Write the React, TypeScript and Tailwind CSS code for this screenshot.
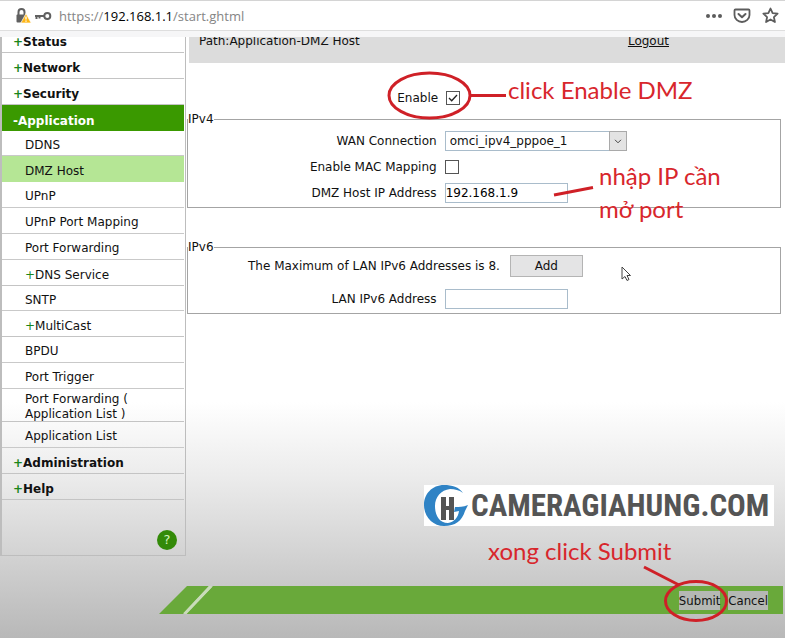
import React from "react";

type Item = { label: string; kind: "top" | "open" | "sub" | "short" | "active" | "parent" | "double" };

const items: Item[] = [
  { label: "Status", kind: "top" },
  { label: "Network", kind: "top" },
  { label: "Security", kind: "top" },
  { label: "Application", kind: "open" },
  { label: "DDNS", kind: "short" },
  { label: "DMZ Host", kind: "active" },
  { label: "UPnP", kind: "sub" },
  { label: "UPnP Port Mapping", kind: "sub" },
  { label: "Port Forwarding", kind: "sub" },
  { label: "DNS Service", kind: "parent" },
  { label: "SNTP", kind: "short" },
  { label: "MultiCast", kind: "parent" },
  { label: "BPDU", kind: "sub" },
  { label: "Port Trigger", kind: "sub" },
  { label: "Port Forwarding ( Application List )", kind: "double" },
  { label: "Application List", kind: "sub" },
  { label: "Administration", kind: "top" },
  { label: "Help", kind: "top" },
];

const rowStyle: Record<Item["kind"], string> = {
  top: "h-[26px] pt-[6px] pl-[11px] font-bold border-b border-[#c4c4c4]",
  open: "h-[26px] pt-[6px] pl-[11px] font-bold text-white bg-[#3a9900]",
  sub: "h-[26px] pt-1 pl-[23px] border-b border-[#c9c9c9]",
  short: "h-[25px] pt-1 pl-[23px] border-b border-[#c9c9c9]",
  active: "h-[26px] pt-1 pl-[23px] bg-[#b5e695]",
  parent: "h-[26px] pt-[6px] pl-[23px] border-b border-[#c4c4c4]",
  double: "h-[33px] pt-1 pl-[23px] pr-10 border-b border-[#c4c4c4]",
};

function AddressBar() {
  return (
    <header className="border-t border-[#d4d4d4] bg-[#f6f6f7]">
      <div className="flex h-[30px] items-center border-b border-[#dedede] bg-white pl-4 pr-[6px]">
        <svg width="16" height="18" viewBox="0 0 16 18" aria-hidden="true">
          <path d="M2.500 8V5a3 3 0 0 1 6 0V8" fill="none" stroke="#606060" strokeWidth="2" />
          <rect x="0.500" y="7.500" width="9" height="8" rx="1" fill="#606060" />
          <path d="M10 6.500 15.200 16H4.800Z" fill="#fdb515" stroke="#fff" strokeWidth="0.700" strokeLinejoin="round" />
          <path d="M10 9.500v3M10 13.600v1.200" stroke="#fff" strokeWidth="1.300" />
        </svg>
        <svg className="ml-[3px]" width="17" height="10" viewBox="0 0 17 10" aria-hidden="true">
          <circle cx="12.300" cy="5" r="3" fill="none" stroke="#606060" strokeWidth="2" />
          <path d="M9.500 5H0M1.500 5v3M4.500 5v2.600" fill="none" stroke="#606060" strokeWidth="2" />
        </svg>
        <span className="ml-[7px] flex-1 pt-px font-['Open_Sans',sans-serif] text-[13px] leading-5 text-[#858585]">
          https://<span className="text-black">192.168.1.1</span>/start.ghtml
        </span>
        <button type="button" aria-label="More">
          <svg width="18" height="6" viewBox="0 0 18 6" fill="#5c5c5c">
            <circle cx="3" cy="3" r="2" />
            <circle cx="9" cy="3" r="2" />
            <circle cx="15" cy="3" r="2" />
          </svg>
        </button>
        <button type="button" aria-label="Save to Pocket" className="ml-[10px]">
          <svg width="18" height="16" viewBox="0 0 18 16" fill="none" stroke="#5c5c5c" strokeWidth="1.800" strokeLinecap="round" strokeLinejoin="round">
            <path d="M2.500 1.500h13q1 0 1 1V7a7.500 7 0 0 1-15 0V2.500q0-1 1-1Z" />
            <path d="m5.500 6 3.500 3.300L12.500 6" strokeWidth="2" />
          </svg>
        </button>
        <button type="button" aria-label="Bookmark" className="ml-[11px]">
          <svg width="17" height="17" viewBox="0 0 17 17" fill="none" stroke="#5c5c5c" strokeWidth="1.800" strokeLinejoin="round">
            <path d="m8.500 1.500 2.100 4.600 5 .6-3.700 3.400 1 4.900-4.400-2.500L4.100 15l1-4.900L1.400 6.700l5-.6Z" />
          </svg>
        </button>
      </div>
      <div className="h-[6px]" />
    </header>
  );
}

function Sidebar() {
  return (
    <aside className="flex w-[186px] shrink-0 flex-col border-b border-l-2 border-r border-[#bdbdbd] pr-px">
      <nav>
        {items.map((item) => (
          <a key={item.label} href="#" className={`flex items-center leading-[15px] ${rowStyle[item.kind]}`}>
            <span>
              {(item.kind === "top" || item.kind === "parent") && <span className="text-[#1a861a]">+</span>}
              {item.kind === "open" && "-"}
              {item.label}
            </span>
          </a>
        ))}
      </nav>
      <div className="mt-[30px] mb-[5px] flex justify-end pr-[7px]">
        <button type="button" aria-label="Help topics" className="size-5 rounded-full bg-[#338a08] text-[13px] leading-5 text-[#d3f5bd]">
          ?
        </button>
      </div>
    </aside>
  );
}

function Row({ label, id, children }: { label: string; id: string; children: React.ReactNode }) {
  return (
    <div className="flex h-[26px] items-center gap-2">
      <label htmlFor={id} className="w-[42%] shrink-0 whitespace-nowrap text-right">
        {label}
      </label>
      {children}
    </div>
  );
}

const tick = "size-[14px] appearance-none border border-[#555] bg-white";
const box = "h-5 w-[123px] border border-[#a9bccb] bg-white text-black";
const group = "mr-1 border border-[#a4a4a4] pb-px";

function Content() {
  return (
    <main className="min-w-0 flex-1 pl-px">
      <div className="ml-[2px] flex h-9 items-start justify-between bg-[#dcdcdc] pt-[2px] pl-[10px] pr-[116px] leading-6">
        <span>Path:Application-DMZ Host</span>
        <a href="#" className="underline">Logout</a>
      </div>
      <form id="dmz" className="pt-[22px]">
        <Row label="Enable" id="enable">
          <span className="grid">
            <input id="enable" type="checkbox" defaultChecked className={`${tick} col-start-1 row-start-1`} />
            <svg className="pointer-events-none col-start-1 row-start-1" width="14" height="14" viewBox="0 0 14 14" fill="none" stroke="#222" strokeWidth="1.300">
              <path d="m3 7 2.700 2.800L11 4" />
            </svg>
          </span>
        </Row>
        <fieldset className={group}>
          <legend className="leading-4">IPv4</legend>
          <div className="pt-px">
            <Row label="WAN Connection" id="wan">
              <span className="grid w-[182px]">
                <select id="wan" className="col-start-1 row-start-1 h-5 appearance-none border border-[#a9bccb] bg-white pl-1">
                  <option>omci_ipv4_pppoe_1</option>
                </select>
                <span className="pointer-events-none col-start-1 row-start-1 flex h-5 w-[18px] items-center justify-center justify-self-end border border-[#a9a9a9] bg-[#e3e3e3]">
                  <svg width="8" height="5" viewBox="0 0 8 5" fill="none" stroke="#444">
                    <path d="m1 .8 3 3 3-3" />
                  </svg>
                </span>
              </span>
            </Row>
            <Row label="Enable MAC Mapping" id="mac">
              <input id="mac" type="checkbox" className={tick} />
            </Row>
            <Row label="DMZ Host IP Address" id="ip">
              <input id="ip" type="text" defaultValue="192.168.1.9" className={box} />
            </Row>
          </div>
        </fieldset>
        <fieldset className={`${group} mt-[31px]`}>
          <legend className="leading-4">IPv6</legend>
          <div className="flex h-[22px] items-center gap-[10px] pl-[60px]">
            <span className="whitespace-nowrap">The Maximum of LAN IPv6 Addresses is 8.</span>
            <button type="button" className="h-[22px] w-[73px] border border-[#b4b4b4] bg-[#e4e4e5]">Add</button>
          </div>
          <div className="pt-[9px]">
            <Row label="LAN IPv6 Address" id="lan">
              <input id="lan" type="text" className={box} />
            </Row>
          </div>
        </fieldset>
      </form>
    </main>
  );
}

function Footer() {
  const button = "h-[19px] bg-[#b5b8b4] font-['DejaVu_Sans_Condensed','DejaVu_Sans',sans-serif] text-[13px] leading-[19px]";
  return (
    <footer className="mt-[30px] ml-[159px] mr-[2px] flex h-7">
      <svg className="shrink-0" width="56" height="28" viewBox="0 0 56 28" aria-hidden="true">
        <path d="M28 0H50L24 28H0Z" fill="#69a93a" />
        <path d="M56 0V28H27L54 0Z" fill="#69a93a" />
        <path d="M52 0 25.500 28" stroke="#c9dcb9" strokeWidth="3" />
      </svg>
      <div className="flex flex-1 items-center justify-end gap-2 bg-[#69a93a] pr-[15px]">
        <button type="submit" form="dmz" className={button}>Submit</button>
        <button type="button" className={button}>Cancel</button>
      </div>
    </footer>
  );
}

function Annotations() {
  return (
    <div className="pointer-events-none absolute inset-0 font-['Lato','Noto_Sans',sans-serif] text-[24px] leading-[33px] text-[#d8262c]">
      <svg className="absolute left-0 top-0" width="785" height="638" fill="none" stroke="#cf2027" strokeWidth="3" aria-hidden="true">
        <ellipse cx="429.500" cy="95.500" rx="40.500" ry="22.500" />
        <path d="M470 95.500h36M554 195l39-7.500M644 567l35 18" />
        <ellipse cx="696" cy="601" rx="30.500" ry="19.500" />
        <path d="M622 267v12l3-2.500 2 4 2-1-2-4h3.500Z" fill="#fff" stroke="#444" strokeWidth="1" />
      </svg>
      <p className="absolute left-[508px] top-[73px] whitespace-nowrap">click Enable DMZ</p>
      <p className="absolute left-[599px] top-[159px] whitespace-nowrap">nhập IP cần<br />mở port</p>
      <p className="absolute left-[488px] top-[534px] whitespace-nowrap">xong click Submit</p>
      <div className="absolute left-[424px] top-[485px] flex h-[41px] w-[350px] items-center bg-white">
        <svg className="shrink-0" width="46" height="41" viewBox="0 0 46 41" aria-hidden="true">
          <path d="M39 8C35 2 28 0 20 0C8 0 0 9 0 20C0 32 9 41 20 41C31 41 38 36 41 26L44 20C39 22 35 22 31 22L30 27L35 26C34 33 30 37 24 38C15 38 11 30 11 21C11 12 17 5 26 4C31 4 35 5 39 8Z" fill="#2f83c5" />
          <path d="M17 12h5v9h3v-9h5v23h-5V25h-3v10h-5Z" fill="#555" />
        </svg>
        <span className="whitespace-nowrap pl-px font-['Roboto_Condensed','Liberation_Sans',sans-serif] text-[31px] font-bold text-[#555]">
          CAMERAGIAHUNG.COM
        </span>
      </div>
    </div>
  );
}

export default function App() {
  return (
    <div className="relative min-h-screen overflow-hidden bg-[linear-gradient(to_bottom,#fff_0%,#fff_63%,#ebebeb_75%,#b8b8b8_100%)] font-['DejaVu_Sans',sans-serif] text-[12px] text-[#111]">
      <AddressBar />
      <div className="overflow-hidden">
        <div className="-mt-[10px] flex">
          <Sidebar />
          <Content />
        </div>
      </div>
      <Footer />
      <Annotations />
    </div>
  );
}
